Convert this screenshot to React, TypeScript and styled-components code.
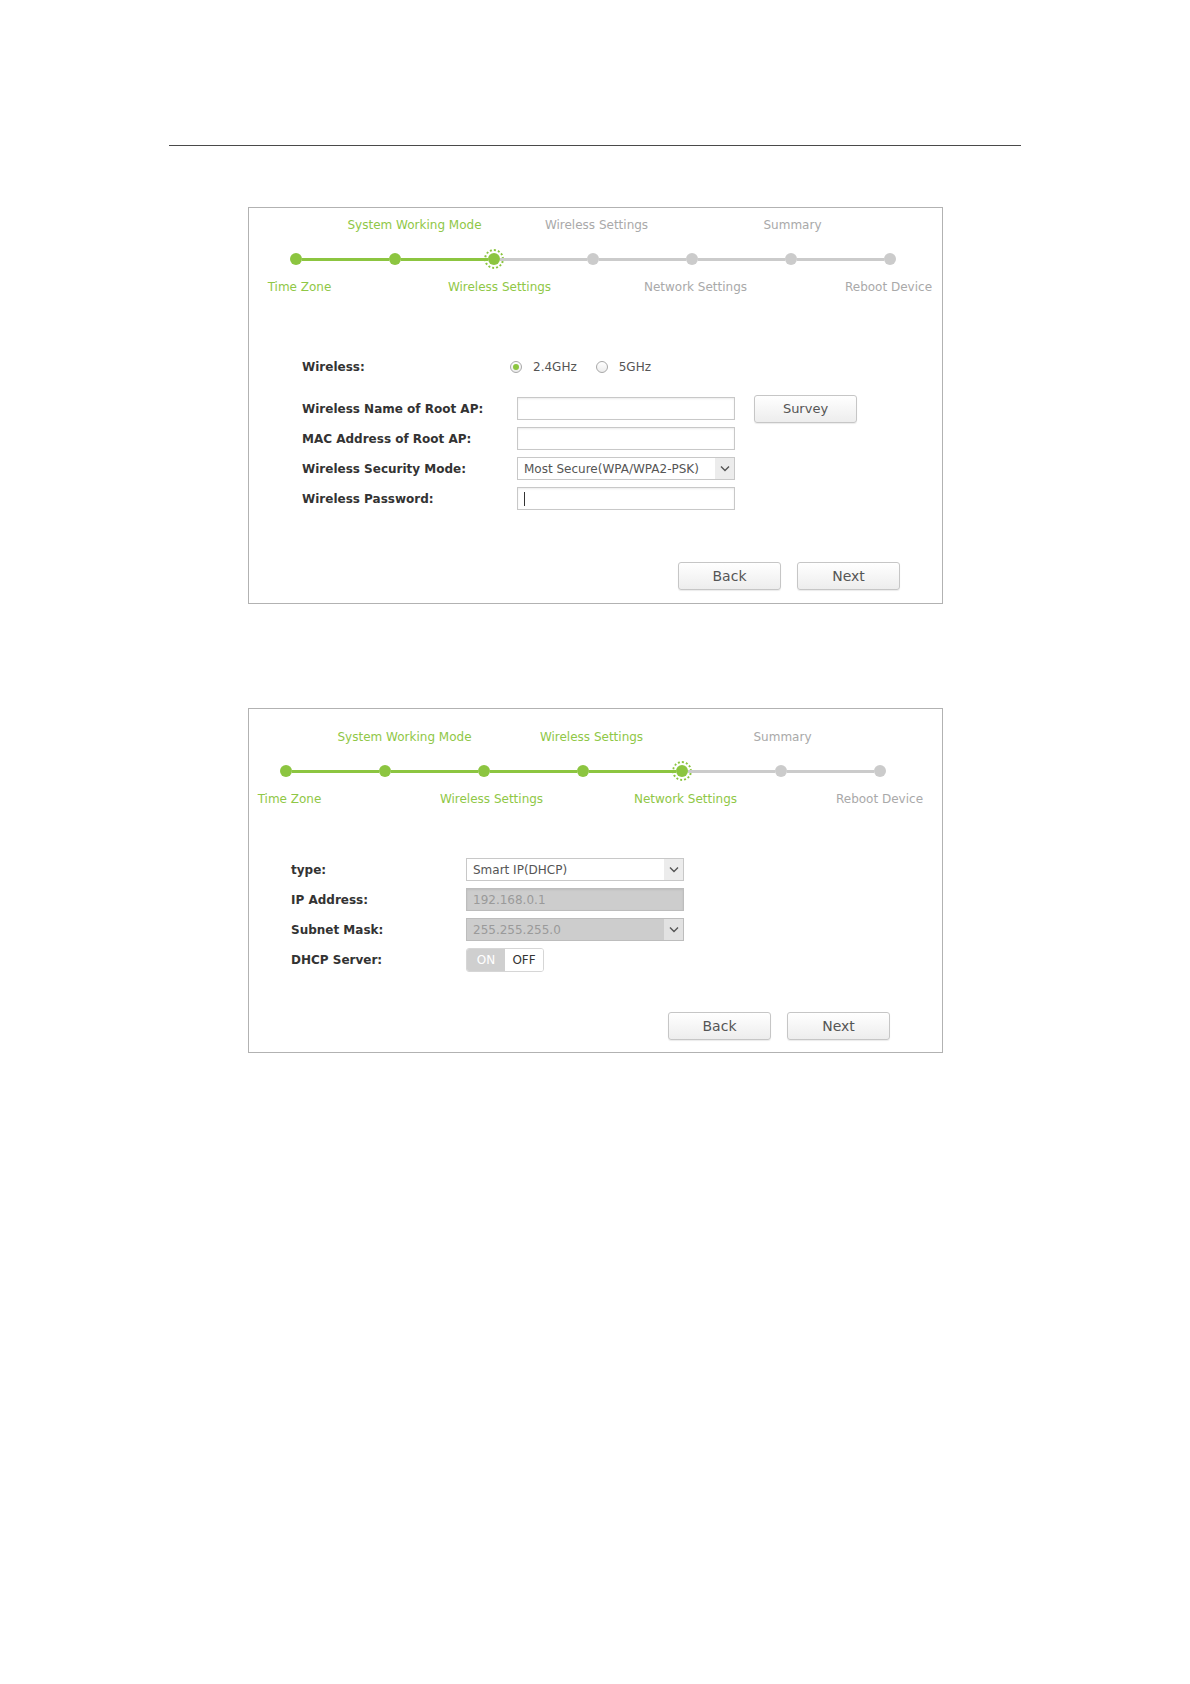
import React from 'react'
import styled, { createGlobalStyle } from 'styled-components'

const Colors = {
  green: '#8cc540',
  greenText: '#8fc746',
  gray: '#cbcbcb',
  grayText: '#a9a9a9',
  frame: '#b2b2b2',
  label: '#333333',
  text: '#555555',
}

const GlobalStyle = createGlobalStyle`
  html, body {
    margin: 0;
    padding: 0;
    background: #ffffff;
  }
  body {
    font-family: 'DejaVu Sans', Verdana, sans-serif;
    font-size: 12px;
    color: ${Colors.label};
  }
`

type StepText = { text: string; col: number; shift: number; done: boolean }

type WizardSteps = {
  current: number
  offset: number
  top: StepText[]
  bottom: StepText[]
}

function Stepper({ current, offset, top, bottom }: WizardSteps) {
  const dots = [1, 2, 3, 4, 5, 6, 7]
  return (
    <Steps $offset={offset}>
      {top.map((s) => (
        <StepLabel key={'t' + s.col} $row={1} $col={s.col} $shift={s.shift} $done={s.done}>
          {s.text}
        </StepLabel>
      ))}
      <Track>
        {dots.map((n) => (
          <React.Fragment key={n}>
            {n > 1 && <Segment $done={n <= current} />}
            <Dot $done={n <= current} $current={n === current} />
          </React.Fragment>
        ))}
      </Track>
      {bottom.map((s) => (
        <StepLabel key={'b' + s.col} $row={5} $col={s.col} $shift={s.shift} $done={s.done}>
          {s.text}
        </StepLabel>
      ))}
    </Steps>
  )
}

function Chevron() {
  return (
    <svg width="10" height="7" viewBox="0 0 10 7">
      <polyline points="1,1.5 5,5.5 9,1.5" fill="none" stroke="#555" strokeWidth="1.4" />
    </svg>
  )
}

function Select({ value, disabled }: { value: string; disabled?: boolean }) {
  return (
    <Field $disabled={disabled} $arrow>
      <FieldText>{value}</FieldText>
      <Arrow $disabled={disabled}>
        <Chevron />
      </Arrow>
    </Field>
  )
}

export default function App() {
  return (
    <Page>
      <GlobalStyle />
      <Rule />

      <Panel $top={61} $padTop={9} $padBottom={13}>
        <Stepper
          current={3}
          offset={-3}
          top={[
            { text: 'System Working Mode', col: 2, shift: 20, done: true },
            { text: 'Wireless Settings', col: 4, shift: 4, done: false },
            { text: 'Summary', col: 6, shift: 2, done: false },
          ]}
          bottom={[
            { text: 'Time Zone', col: 1, shift: 4, done: true },
            { text: 'Wireless Settings', col: 3, shift: 6, done: true },
            { text: 'Network Settings', col: 5, shift: 4, done: false },
            { text: 'Reboot Device', col: 7, shift: -1, done: false },
          ]}
        />

        <Form $top={60} $left={53}>
          <Row $labelWidth={215} $after={12}>
            <Label>Wireless:</Label>
            <RadioGroup>
              <Radio $checked />
              <RadioText>2.4GHz</RadioText>
              <Radio />
              <RadioText>5GHz</RadioText>
            </RadioGroup>
          </Row>
          <Row $labelWidth={215}>
            <Label>Wireless Name of Root AP:</Label>
            <Field />
            <Button $small $aside>Survey</Button>
          </Row>
          <Row $labelWidth={215}>
            <Label>MAC Address of Root AP:</Label>
            <Field />
          </Row>
          <Row $labelWidth={215}>
            <Label>Wireless Security Mode:</Label>
            <Select value="Most Secure(WPA/WPA2-PSK)" />
          </Row>
          <Row $labelWidth={215}>
            <Label>Wireless Password:</Label>
            <Field>
              <Caret />
            </Field>
          </Row>
        </Form>

        <Footer $top={52} $right={42}>
          <Button>Back</Button>
          <Button>Next</Button>
        </Footer>
      </Panel>

      <Panel $top={104} $padTop={20} $padBottom={12}>
        <Stepper
          current={5}
          offset={-13}
          top={[
            { text: 'System Working Mode', col: 2, shift: 20, done: true },
            { text: 'Wireless Settings', col: 4, shift: 9, done: true },
            { text: 'Summary', col: 6, shift: 2, done: false },
          ]}
          bottom={[
            { text: 'Time Zone', col: 1, shift: 4, done: true },
            { text: 'Wireless Settings', col: 3, shift: 8, done: true },
            { text: 'Network Settings', col: 5, shift: 4, done: true },
            { text: 'Reboot Device', col: 7, shift: 0, done: false },
          ]}
        />

        <Form $top={51} $left={42}>
          <Row $labelWidth={175}>
            <Label>type:</Label>
            <Select value="Smart IP(DHCP)" />
          </Row>
          <Row $labelWidth={175}>
            <Label>IP Address:</Label>
            <Field $disabled>
              <FieldText>192.168.0.1</FieldText>
            </Field>
          </Row>
          <Row $labelWidth={175}>
            <Label>Subnet Mask:</Label>
            <Select value="255.255.255.0" disabled />
          </Row>
          <Row $labelWidth={175}>
            <Label>DHCP Server:</Label>
            <Toggle>
              <ToggleSide $on>ON</ToggleSide>
              <ToggleSide>OFF</ToggleSide>
            </Toggle>
          </Row>
        </Form>

        <Footer $top={41} $right={52}>
          <Button>Back</Button>
          <Button>Next</Button>
        </Footer>
      </Panel>
    </Page>
  )
}

const Page = styled.div`
  width: 1190px;
  min-height: 1684px;
  padding-top: 145px;
  box-sizing: border-box;
  background: #ffffff;
`

const Rule = styled.div`
  width: 852px;
  height: 1px;
  margin-left: 169px;
  background: #4a4a4a;
`

const Panel = styled.section<{ $top: number; $padTop: number; $padBottom: number }>`
  width: 695px;
  box-sizing: border-box;
  margin: ${(p) => p.$top}px 0 0 248px;
  padding: ${(p) => p.$padTop}px 0 ${(p) => p.$padBottom}px;
  border: 1px solid ${Colors.frame};
  background: #ffffff;
`

/* rows: top label / spacer / track / spacer / bottom label */
const Steps = styled.div<{ $offset: number }>`
  display: grid;
  grid-template-columns: repeat(7, 99px);
  grid-template-rows: 16px 16px 20px 10px 16px;
  margin-left: ${(p) => p.$offset}px;
`

const StepLabel = styled.span<{ $row: number; $col: number; $shift: number; $done: boolean }>`
  grid-row: ${(p) => p.$row};
  grid-column: ${(p) => p.$col};
  justify-self: center;
  align-self: center;
  margin-left: ${(p) => p.$shift * 2}px;
  white-space: nowrap;
  font-size: 12px;
  line-height: 16px;
  color: ${(p) => (p.$done ? Colors.greenText : Colors.grayText)};
`

const Track = styled.div`
  grid-row: 3;
  grid-column: 1 / -1;
  display: flex;
  align-items: center;
  margin: 0 43.5px;
`

const Segment = styled.div<{ $done: boolean }>`
  flex: 1;
  height: 3px;
  background: ${(p) => (p.$done ? Colors.green : Colors.gray)};
`

const Dot = styled.div<{ $done: boolean; $current: boolean }>`
  flex: none;
  width: 12px;
  height: 12px;
  border-radius: 50%;
  background: ${(p) => (p.$done ? Colors.green : Colors.gray)};
  outline: ${(p) => (p.$current ? `2px dotted ${Colors.green}` : 'none')};
  outline-offset: 2px;
`

const Form = styled.div<{ $top: number; $left: number }>`
  display: flex;
  flex-direction: column;
  gap: 7px;
  margin: ${(p) => p.$top}px 0 0 ${(p) => p.$left}px;
`

const Row = styled.div<{ $labelWidth: number; $after?: number }>`
  display: grid;
  grid-template-columns: ${(p) => p.$labelWidth}px 218px auto;
  grid-template-rows: 23px;
  align-items: center;
  height: 23px;
  margin-bottom: ${(p) => p.$after || 0}px;
`

const Label = styled.span`
  font-size: 12px;
  font-weight: bold;
  color: ${Colors.label};
  white-space: nowrap;
`

const RadioGroup = styled.div`
  display: flex;
  align-items: center;
  margin-left: -7px;
`

const Radio = styled.span<{ $checked?: boolean }>`
  box-sizing: border-box;
  display: flex;
  align-items: center;
  justify-content: center;
  width: 12px;
  height: 12px;
  border-radius: 50%;
  border: 1px solid #a8a8a8;
  background: linear-gradient(#ffffff, #ececec);

  &::after {
    content: '';
    display: ${(p) => (p.$checked ? 'block' : 'none')};
    width: 6px;
    height: 6px;
    border-radius: 50%;
    background: ${Colors.green};
  }
`

const RadioText = styled.span`
  margin: 0 19px 0 11px;
  font-size: 12px;
  color: ${Colors.text};
`

const Field = styled.div<{ $disabled?: boolean; $arrow?: boolean }>`
  box-sizing: border-box;
  display: flex;
  align-items: center;
  width: 218px;
  height: 23px;
  padding-left: 6px;
  border: 1px solid ${(p) => (p.$disabled ? '#bdbdbd' : '#c8c8c8')};
  background: ${(p) => (p.$disabled ? '#cdcdcd' : '#ffffff')};
  box-shadow: ${(p) => (p.$arrow ? 'none' : 'inset 0 1px 2px rgba(0, 0, 0, 0.08)')};
  color: ${(p) => (p.$disabled ? '#9a9a9a' : Colors.text)};
  font-size: 12px;
`

const FieldText = styled.span`
  flex: 1;
  white-space: nowrap;
  overflow: hidden;
`

const Arrow = styled.span<{ $disabled?: boolean }>`
  display: flex;
  align-items: center;
  justify-content: center;
  width: 19px;
  align-self: stretch;
  background: ${(p) => (p.$disabled ? '#e2e2e2' : '#ececec')};
`

const Caret = styled.span`
  width: 1px;
  height: 14px;
  background: #333333;
`

const Toggle = styled.div`
  box-sizing: border-box;
  display: flex;
  width: 78px;
  height: 24px;
  border: 1px solid #d6d6d6;
  border-radius: 3px;
  overflow: hidden;
  font-size: 12px;
`

const ToggleSide = styled.span<{ $on?: boolean }>`
  display: flex;
  align-items: center;
  justify-content: center;
  width: ${(p) => (p.$on ? '38px' : 'auto')};
  flex: ${(p) => (p.$on ? 'none' : '1')};
  background: ${(p) => (p.$on ? '#cfcfcf' : '#ffffff')};
  color: ${(p) => (p.$on ? '#ffffff' : Colors.label)};
`

const Footer = styled.div<{ $top: number; $right: number }>`
  display: flex;
  justify-content: flex-end;
  gap: 16px;
  margin-top: ${(p) => p.$top}px;
  padding-right: ${(p) => p.$right}px;
`

const Button = styled.button<{ $small?: boolean; $aside?: boolean }>`
  box-sizing: border-box;
  width: 103px;
  height: 28px;
  margin: 0 0 0 ${(p) => (p.$aside ? '19px' : '0')};
  align-self: ${(p) => (p.$aside ? 'center' : 'auto')};
  padding: 0;
  border: 1px solid #c6c6c6;
  border-radius: 3px;
  background: linear-gradient(#ffffff, #ededed);
  box-shadow: 0 1px 1px rgba(0, 0, 0, 0.08);
  font-family: 'DejaVu Sans', Verdana, sans-serif;
  font-size: ${(p) => (p.$small ? '13px' : '14px')};
  color: ${Colors.text};
  cursor: pointer;
`
